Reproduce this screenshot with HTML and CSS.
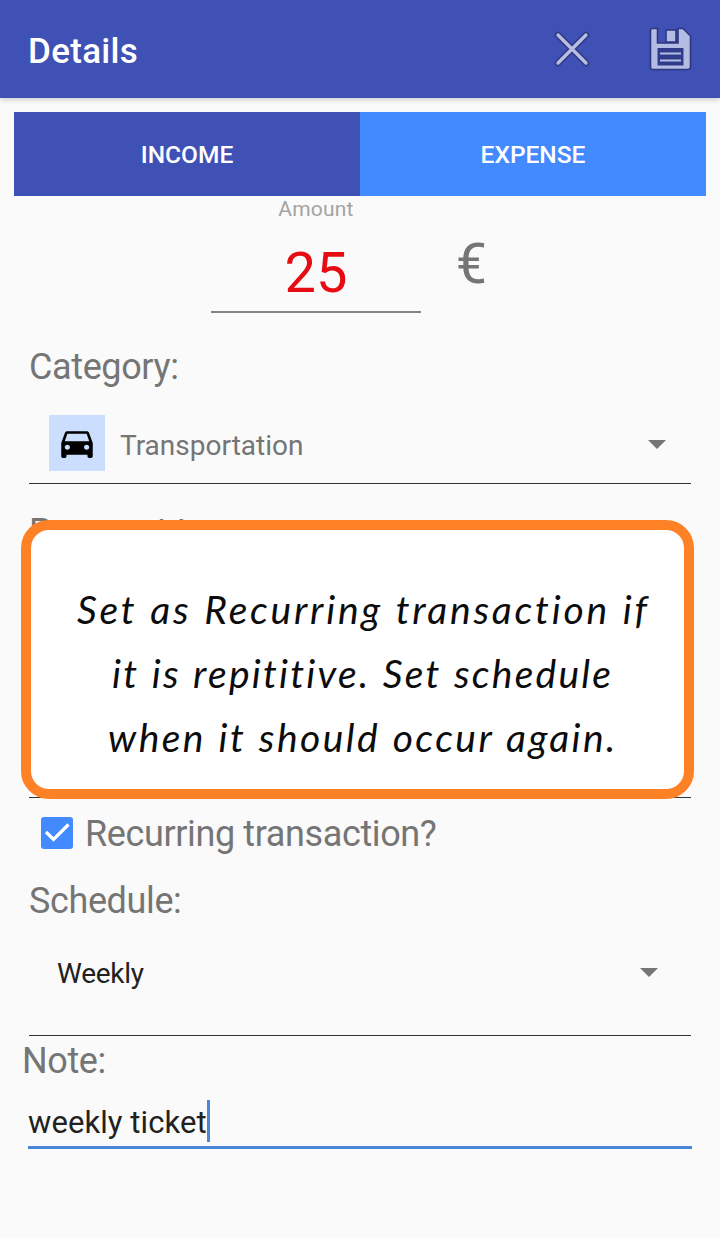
FILE: index.html
```html
<!DOCTYPE html>
<html lang="en">
<head>
<meta charset="utf-8">
<title>Details</title>
<link rel="stylesheet" href="styles.css">
</head>
<body>
<header class="appbar">
  <h1 class="title">Details</h1>
  <svg class="close" width="36" height="36" viewBox="0 0 36 36"><path class="cross-edge" d="M4 4 32 32M32 4 4 32"/><path class="cross" d="M4 4 32 32M32 4 4 32"/></svg>
  <svg class="save" width="44" height="44" viewBox="0 0 44 44"><path class="disk" d="M3 1.500H8.500V16H29V1.500H34L41.500 9V40Q41.500 42.500 39 42.500H3.500Q1.500 42.500 1.500 40V3.500Q1.500 1.500 3 1.500Z"/><path class="disk" d="M17 3H27V15H17Z"/><path class="label-area" d="M8.500 21H34.500V38.500H8.500Z"/><path class="label-lines" d="M11 26.500H32M11 33.500H32"/></svg>
</header>
<main class="form">
  <div class="tabs"><div class="tab">INCOME</div><div class="tab active">EXPENSE</div></div>
  <div class="amount-row">
    <div class="amount"><span class="hint">Amount</span><span class="value">25</span></div>
    <span class="currency">€</span>
  </div>
  <section class="field category">
    <h2 class="label">Category:</h2>
    <div class="select">
      <span class="badge"><svg width="42" height="40" viewBox="0 0 24 24" preserveAspectRatio="none"><path d="M18.920 6.010C18.720 5.420 18.160 5 17.500 5h-11c-.66 0-1.210.42-1.420 1.010L3 12v8c0 .55.45 1 1 1h1c.55 0 1-.45 1-1v-1h12v1c0 .55.45 1 1 1h1c.55 0 1-.45 1-1v-8l-2.080-5.990zM6.500 16c-.83 0-1.500-.67-1.500-1.500S5.670 13 6.500 13s1.500.67 1.500 1.500S7.330 16 6.500 16zm11 0c-.83 0-1.500-.67-1.500-1.500s.67-1.500 1.500-1.500 1.500.67 1.500 1.500-.67 1.500-1.500 1.500zM5 11l1.500-4.500h11L19 11H5z"/></svg></span>
      <span class="choice">Transportation</span>
      <i class="arrow"></i>
    </div>
  </section>
  <section class="field payment">
    <h2 class="label">Payment type:</h2>
    <aside class="callout">
      <p class="note-line one">Set as Recurring transaction if</p>
      <p class="note-line two">it is repititive. Set schedule</p>
      <p class="note-line three">when it should occur again.</p>
    </aside>
  </section>
  <div class="check-row">
    <span class="checkbox"><svg width="32" height="32" viewBox="0 0 32 32"><path d="M5 15 12.500 22.500 27.500 7.500"/></svg></span>
    <span class="label">Recurring transaction?</span>
  </div>
  <section class="field schedule">
    <h2 class="label">Schedule:</h2>
    <div class="select"><span class="choice">Weekly</span><i class="arrow"></i></div>
  </section>
  <section class="note">
    <h2 class="label">Note:</h2>
    <div class="input"><span>weekly ticket</span><i class="caret"></i></div>
  </section>
</main>
</body>
</html>
```
FILE: styles.css
```css
* { box-sizing: border-box; }
body { margin: 0; height: 1238px; overflow: hidden; background: #fafafa; font-family: Roboto, sans-serif; color: #757575; }
h1, h2, p { margin: 0; font-weight: 400; }
svg { display: block; flex: none; }

.appbar { height: 98px; display: flex; align-items: center; padding: 2px 27px 0 28px; background: #3f51b5; box-shadow: 0 1px 6px rgba(0,0,0,.22); }
.title { flex: 1; color: #fff; font-size: 35px; font-weight: 500; line-height: 42px; letter-spacing: .3px; padding-top: 3px; }
.close { margin: -2px 59px 0 0; }
.save { margin-top: -2px; }
.cross-edge, .cross { fill: none; stroke-linecap: round; }
.cross-edge { stroke: #303a86; stroke-width: 6.500; }
.cross { stroke: #b9bfe2; stroke-width: 3.300; }
.disk { fill: #b5bce3; stroke: #2c3780; stroke-width: 1.600; }
.label-area { fill: #303b8c; }
.label-lines { stroke: #b5bce3; stroke-width: 2.200; }

.tabs { display: flex; height: 84px; margin: 14px 14px 0; }
.tab { flex: 1; display: flex; align-items: center; justify-content: center; background: #3f51b5; color: #fff; font-size: 24.500px; font-weight: 500; }
.tab.active { background: #448aff; }

.amount-row { display: flex; height: 117px; padding-left: 211px; }
.amount { width: 210px; display: flex; flex-direction: column; align-items: center; border-bottom: 2px solid #858585; }
.hint { font-size: 21px; line-height: 26px; color: #a3a3a3; letter-spacing: .2px; }
.value { font-size: 56px; line-height: 66px; color: #e60c12; margin-top: 18px; }
.currency { font-size: 55px; line-height: 60px; margin: 38px 0 0 35px; }

.label { font-size: 36px; line-height: 42px; letter-spacing: -.38px; }
.field { border-bottom: 1px solid #333; margin: 0 29px; }
.select { display: flex; align-items: center; }
.choice { font-size: 28px; line-height: 34px; }
.arrow { margin-left: auto; border: 9px solid transparent; border-top-color: #757575; border-bottom: 0; }

.category { height: 171px; padding-top: 33px; }
.category .select { height: 56px; margin: 27px 25px 0 20px; }
.category .choice { margin: 5px 0 0 15px; }
.category .arrow { margin-top: 2px; }
.badge { width: 56px; height: 56px; display: grid; place-items: center; background: #cbdefd; }

.payment { position: relative; height: 314px; padding-top: 27px; }
.callout { position: absolute; left: -8px; top: 36px; width: 673px; height: 279px; padding-top: 47px; border: 10px solid #ff8126; border-radius: 28px; background: #fff; color: #0c0c0c; font-family: "Segoe Print", Lato, sans-serif; font-style: italic; font-size: 39px; }
.note-line { height: 64px; line-height: 64px; white-space: nowrap; }
.one { padding-left: 46px; letter-spacing: 2.780px; word-spacing: 1px; }
.two { padding-left: 81px; letter-spacing: 2.250px; word-spacing: 1px; }
.three { padding-left: 77px; letter-spacing: 2.450px; word-spacing: 1px; }

.check-row { display: flex; align-items: center; height: 72px; padding-left: 41px; }
.checkbox { width: 32px; height: 32px; border-radius: 3px; background: #448aff; margin: -2px 12px 0 0; }
.checkbox path { fill: none; stroke: #fff; stroke-width: 3.200; }

.schedule { height: 166px; padding-top: 10px; }
.schedule .select { margin: 35px 33px 0 28px; color: #212121; }
.schedule .choice { letter-spacing: -.25px; }
.schedule .arrow { margin-top: -3px; }

.note { padding: 4px 28px 0; }
.note .label { margin-left: -6px; }
.input { display: flex; align-items: center; height: 67px; padding-top: 17px; border-bottom: 3px solid #4c86d8; color: #212121; font-size: 31px; letter-spacing: .08px; }
.caret { width: 3px; height: 42px; background: #4c86d8; margin-top: -3px; }
```
